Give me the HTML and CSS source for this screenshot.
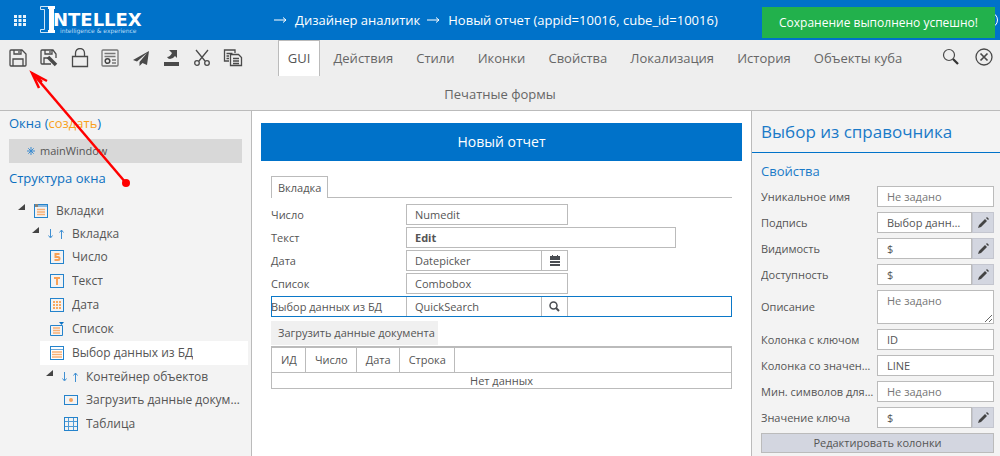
FILE: index.html
```html
<!DOCTYPE html>
<html lang="ru">
<head>
<meta charset="utf-8">
<title>Дизайнер аналитик</title>
<link rel="stylesheet" href="styles.css">
</head>
<body>
<header class="header">
  <button class="icon-btn apps" aria-label="Приложения"><svg width="12" height="11" fill="#e8f3fb"><path d="M0 0h3v3H0zM4.500 0h3v3h-3zM9 0h3v3H9zM0 4h3v3H0zM4.500 4h3v3h-3zM9 4h3v3H9zM0 8h3v3H0zM4.500 8h3v3h-3zM9 8h3v3H9z"/></svg></button>
  <a class="logo" href="#"><svg width="104" height="30" fill="#fff">
    <path d="M8 1.500H.5v3h4v20h-4v3H8" fill="none" stroke="#cfe6f7"/>
    <path d="M8 1h7v3h-1v21h1v3H8v-3h1V4H8z"/>
    <text class="logo-name" x="13" y="21">NTELLEX</text>
    <text class="logo-sub" x="20" y="28">intelligence &amp; experience</text>
  </svg></a>
  <nav class="crumbs">
    <svg class="arrow" width="14" height="8"><path d="M0 4h12M9 1.500L12 4 9 6.500"/></svg>
    <a href="#">Дизайнер аналитик</a>
    <svg class="arrow" width="14" height="8"><path d="M0 4h12M9 1.500L12 4 9 6.500"/></svg>
    <a href="#">Новый отчет (appid=10016, cube_id=10016)</a>
  </nav>
  <button class="icon-btn help" aria-label="Справка"><svg width="18" height="18"><circle cx="9" cy="9" r="7.500" fill="none" stroke="#fff"/></svg></button>
  <div class="toast" role="status">Сохранение выполнено успешно!</div>
</header>

<div class="toolbar">
  <div class="tools">
    <button class="icon-btn" aria-label="Сохранить"><svg width="18" height="18"><path d="M1 2q0-1 1-1h11l4 4v11q0 1-1 1H2q-1 0-1-1zM5 1v4h7V1M10 2v2M4 17v-7h10v7"/></svg></button>
    <button class="icon-btn" aria-label="Сохранить как"><svg width="18" height="18"><path d="M16 9V5l-3-4H2Q1 1 1 2v12q0 1 1 1h9M5 1v4h7V1M10 2v2M4 15V9h4"/><path d="M8 8l8 8" stroke-width="3.500"/></svg></button>
    <button class="icon-btn" aria-label="Блокировка"><svg width="18" height="20"><path d="M1.500 8.500h15v10h-15zM4.500 8.500V5a4.500 4.500 0 0 1 9 0v3.500"/></svg></button>
    <button class="icon-btn" aria-label="Права"><svg width="18" height="18"><g stroke="#777"><rect x="1" y="1" width="16" height="16" rx="1"/><path d="M3.500 4.500h11M3.500 7.500h11M11 11h4M11 14h4"/><circle cx="6.500" cy="12" r="2.300" stroke="#444" stroke-width="1.500"/></g></svg></button>
    <button class="icon-btn" aria-label="Отправить"><svg width="18" height="18"><path d="M17 2L1 11l4 1.500L15 4 7.500 13v4l3-3 4.500 2z" fill="#4a4a4a" stroke="none"/></svg></button>
    <button class="icon-btn" aria-label="Экспорт"><svg width="18" height="18"><path d="M2 13h15v4H2zM7 1h8v8l-2-2q-2 3-5 3-2 0-3-2 3 0 5-4z" fill="#4a4a4a" stroke="none"/></svg></button>
    <button class="icon-btn" aria-label="Вырезать"><svg width="18" height="18"><path d="M3 1l9 11M15 1L6 12"/><circle cx="4" cy="14" r="2.300"/><circle cx="14" cy="14" r="2.300"/></svg></button>
    <button class="icon-btn" aria-label="Копировать"><svg width="20" height="18"><path d="M6 12H1.500V1H12v3M3.500 4.500h6M3.500 7H6M3.500 9.500H6"/><path d="M7.500 5.500h8l3 3v8h-11zM10 9.500h6M10 12h6M10 14.500h6"/></svg></button>
  </div>
  <div class="tools-right">
    <button class="icon-btn" aria-label="Поиск"><svg width="18" height="18"><circle cx="7" cy="7" r="5.500" stroke-width="1.200"/><path d="M11 11l5 5" stroke-width="2.300" stroke="#333"/></svg></button>
    <button class="icon-btn" aria-label="Закрыть"><svg width="18" height="18"><circle cx="9" cy="9" r="8"/><path d="M5.500 5.500l7 7M12.500 5.500l-7 7" stroke-width="1.700"/></svg></button>
  </div>
  <a class="tab tab-active" href="#">GUI</a>
  <a class="tab" href="#">Действия</a>
  <a class="tab" href="#">Стили</a>
  <a class="tab" href="#">Иконки</a>
  <a class="tab" href="#">Свойства</a>
  <a class="tab" href="#">Локализация</a>
  <a class="tab" href="#">История</a>
  <a class="tab" href="#">Объекты куба</a>
  <a class="tab" href="#">Печатные формы</a>
</div>

<div class="workspace">
  <aside class="side">
    <h2 class="side-title">Окна (<a class="create" href="#">создать</a>)</h2>
    <a class="window-item" href="#"><svg width="8" height="8"><path d="M4 0v8M0 4h8M1.300 1.300l5.400 5.400M6.700 1.300L1.300 6.700" stroke="#3b8bd0"/></svg>mainWindow</a>
    <h2 class="side-title">Структура окна</h2>
    <ul class="tree">
      <li>
        <div class="node parent"><svg class="caret" width="8" height="8"><path d="M7 0v6H0z"/></svg><svg width="14" height="14"><rect class="frame" x=".5" y=".5" width="13" height="13"/><path d="M1 1h12v2H1z" fill="#8bb9df"/><path d="M1 0h3v3H1z" fill="#8a8378"/><path class="bars" d="M3 5.500h8M3 8h8M3 10.500h8"/></svg><span>Вкладки</span></div>
        <ul>
          <li>
            <div class="node parent"><svg class="caret" width="8" height="8"><path d="M7 0v6H0z"/></svg><svg width="16" height="10"><path class="move" d="M2.500 0v8M.5 6.500l2 2.500 2-2.500M13.500 10V1M11.500 3.500l2-2.500 2 2.500"/></svg><span>Вкладка</span></div>
            <ul>
              <li class="node"><svg width="14" height="14"><rect class="frame" x=".5" y=".5" width="13" height="13"/><path class="glyph" d="M9.500 4h-4v3h2.500q1.500 0 1.500 1.500T8 10H4.500"/></svg><span>Число</span></li>
              <li class="node"><svg width="14" height="14"><rect class="frame" x=".5" y=".5" width="13" height="13"/><path class="glyph" d="M4 4h6M7 4v7"/></svg><span>Текст</span></li>
              <li class="node"><svg width="14" height="14"><rect class="frame" x=".5" y=".5" width="13" height="13"/><path class="dots" d="M3 4h9M3 7h9M3 10h9"/></svg><span>Дата</span></li>
              <li class="node"><svg width="14" height="14"><path class="frame" d="M.5 3.500h12v10H.5z"/><path d="M9 0h5l-2.500 3z" fill="#0b72c4"/><path class="bars" d="M3 6h7M3 8.500h7M3 11h7"/></svg><span>Список</span></li>
              <li class="node selected"><svg width="14" height="14"><rect class="frame" x=".5" y=".5" width="13" height="13"/><path d="M1 3.500h12" stroke="#6aa8da"/><path class="bars" d="M2 6h10M2 8.500h10M2 11h10"/></svg><span>Выбор данных из БД</span></li>
              <li>
                <div class="node parent"><svg class="caret" width="8" height="8"><path d="M7 0v6H0z"/></svg><svg width="16" height="10"><path class="move" d="M2.500 0v8M.5 6.500l2 2.500 2-2.500M13.500 10V1M11.500 3.500l2-2.500 2 2.500"/></svg><span>Контейнер объектов</span></div>
                <ul>
                  <li class="node"><svg width="14" height="14"><rect class="frame" x=".5" y="2.500" width="13" height="9"/><circle cx="7" cy="7" r="2" fill="#f5a25d"/></svg><span>Загрузить данные документа</span></li>
                  <li class="node"><svg width="14" height="14"><rect class="frame" x=".5" y=".5" width="13" height="13"/><path d="M4.500 1v12M9.500 1v12M1 4.500h12M1 9.500h12" stroke="#4d9ad6"/></svg><span>Таблица</span></li>
                </ul>
              </li>
            </ul>
          </li>
        </ul>
      </li>
    </ul>
  </aside>

  <main class="canvas">
    <h1 class="banner">Новый отчет</h1>
    <div class="form">
      <div class="form-tabs"><a class="form-tab" href="#">Вкладка</a></div>
      <div class="row"><label for="num">Число</label><input id="num" value="Numedit"></div>
      <div class="row"><label for="txt">Текст</label><input id="txt" class="wide" value="Edit"></div>
      <div class="row"><label for="date">Дата</label><input id="date" class="joined" value="Datepicker"><button class="addon" aria-label="Календарь"><svg width="10" height="11" fill="#4a4d52"><path d="M0 1h2V0h1v1h4V0h1v1h2v4H0zM0 6h10v2H0zM0 9h10v2H0z"/></svg></button></div>
      <div class="row"><label for="list">Список</label><input id="list" value="Combobox"></div>
      <div class="row row-selected"><label for="qs">Выбор данных из БД</label><input id="qs" class="joined" value="QuickSearch"><button class="addon" aria-label="Найти"><svg width="11" height="11" fill="none" stroke="#4a4d52"><circle cx="4.500" cy="4.500" r="3.500" stroke-width="1.500"/><path d="M7 7l3 3" stroke-width="2"/></svg></button></div>
      <button class="load">Загрузить данные документа</button>
      <table class="grid">
        <thead><tr><th>ИД</th><th>Число</th><th>Дата</th><th>Строка</th><th class="rest"></th></tr></thead>
        <tbody><tr><td colspan="5">Нет данных</td></tr></tbody>
      </table>
    </div>
  </main>

  <aside class="props">
    <h2 class="props-title">Выбор из справочника</h2>
    <div class="props-body">
      <h3 class="props-sub">Свойства</h3>
      <div class="prop"><label for="p1">Уникальное имя</label><input id="p1" placeholder="Не задано"></div>
      <div class="prop"><label for="p2">Подпись</label><input id="p2" value="Выбор данных из БД"><button class="edit" aria-label="Изменить подпись"><svg width="11" height="11"><path d="M0 11l1-3 6-6 2 2-6 6zM8 1l1-1 2 2-1 1z"/></svg></button></div>
      <div class="prop"><label for="p3">Видимость</label><input id="p3" value="$"><button class="edit" aria-label="Изменить видимость"><svg width="11" height="11"><path d="M0 11l1-3 6-6 2 2-6 6zM8 1l1-1 2 2-1 1z"/></svg></button></div>
      <div class="prop"><label for="p4">Доступность</label><input id="p4" value="$"><button class="edit" aria-label="Изменить доступность"><svg width="11" height="11"><path d="M0 11l1-3 6-6 2 2-6 6zM8 1l1-1 2 2-1 1z"/></svg></button></div>
      <div class="prop"><label for="p5">Описание</label><textarea id="p5" placeholder="Не задано"></textarea></div>
      <div class="prop"><label for="p6">Колонка с ключом</label><input id="p6" value="ID"></div>
      <div class="prop"><label for="p7">Колонка со значением</label><input id="p7" value="LINE"></div>
      <div class="prop"><label for="p8">Мин. символов для поиска</label><input id="p8" placeholder="Не задано"></div>
      <div class="prop"><label for="p9">Значение ключа</label><input id="p9" value="$"><button class="edit" aria-label="Изменить значение ключа"><svg width="11" height="11"><path d="M0 11l1-3 6-6 2 2-6 6zM8 1l1-1 2 2-1 1z"/></svg></button></div>
      <button class="columns">Редактировать колонки</button>
    </div>
  </aside>
</div>

<svg class="pointer" width="140" height="195" fill="none" stroke="#f00"><path d="M126 183L34 75" stroke-width="2.500"/><path d="M47 81L32 73l7 15M32 73l10 9" stroke-width="2.500"/><circle cx="126" cy="183" r="4" fill="#f00" stroke="none"/></svg>
</body>
</html>
```
FILE: styles.css
```css
* { box-sizing: border-box; }
body {
  margin: 0;
  min-height: 100vh;
  display: flex;
  flex-direction: column;
  position: relative;
  overflow-x: hidden;
  background: #fff;
  color: #555;
  font: 12px/16px "Open Sans", "Noto Sans", sans-serif;
}
a { color: inherit; text-decoration: none; }
h1, h2, h3, ul { margin: 0; padding: 0; font-weight: 400; list-style: none; }
button, input, textarea { font: inherit; color: inherit; margin: 0; border-radius: 0; }
svg { display: block; flex: none; }
.icon-btn { border: 0; padding: 0; background: none; display: flex; justify-content: center; align-items: center; }

.header {
  position: relative;
  display: flex;
  align-items: center;
  height: 40px;
  background: #0072c9;
  color: #fff;
}
.apps { margin-left: 14px; }
.logo { margin-left: 14px; }
.logo-name { font: bold 18px "DejaVu Sans", sans-serif; }
.logo-sub { font: 6px "DejaVu Sans", sans-serif; fill: #b8dbf5; }
.crumbs { display: flex; align-items: center; gap: 7px; margin-left: 130px; font-size: 13px; white-space: nowrap; }
.arrow { fill: none; stroke: #fff; }
.help { margin-left: auto; margin-right: 1px; }
.toast {
  position: absolute;
  top: 7px;
  right: 5px;
  padding: 7px 17px;
  background: #22b14c;
  font-size: 12px;
  line-height: 17px;
}

.toolbar {
  background: #eee;
  border-bottom: 1px solid #bbb;
  text-align: center;
}
.tools { float: left; width: 245px; height: 35px; margin-left: 3px; display: grid; grid-template-columns: repeat(8, 1fr); align-items: center; }
.tools-right { float: right; height: 34px; display: flex; align-items: center; gap: 15px; margin-right: 7px; }
.tools svg, .tools-right svg { fill: none; stroke: #4a4a4a; stroke-width: 1.3; }
.tab {
  display: inline-block;
  vertical-align: top;
  height: 34px;
  padding: 7px 9px;
  border: 1px solid transparent;
  border-bottom: 0;
  font-size: 13px;
  line-height: 20px;
  color: #666;
}
.tab-active { background: #fff; border-color: #bbb; height: 36px; color: #555; }

.workspace { flex: 1; display: grid; grid-template-columns: 251px minmax(0, 1fr) 248px; }
.side { background: #f3f3f3; padding: 4px 3px 0 9px; min-width: 0; }
.side-title { font-size: 13px; line-height: 16px; color: #0b6fc0; }
.create { color: #f9a11b; }
.window-item {
  display: flex;
  align-items: center;
  gap: 5px;
  margin: 8px 6px 7px 0;
  padding-left: 18px;
  height: 24px;
  background: #d8d8d8;
  font-size: 11px;
}
.tree { margin-top: 13px; }
.tree ul { padding-left: 14px; }
.node { display: flex; align-items: center; gap: 8px; height: 24px; padding: 0 7px 0 10px; margin-left: 3px; }
.node span { overflow: hidden; text-overflow: ellipsis; white-space: nowrap; }
.parent { height: 23px; padding-left: 0; margin-left: 9px; }
.parent .caret { margin-bottom: 6px; fill: #444; }
.selected { background: #fff; }
.frame { fill: none; stroke: #2483cc; }
.bars { fill: none; stroke: #f9b074; stroke-width: 1.5; }
.dots { fill: none; stroke: #f9a860; stroke-width: 2; stroke-dasharray: 2 1; }
.glyph { fill: none; stroke: #f9a055; stroke-width: 2; }
.move { fill: none; stroke: #3f8fd2; }

.canvas { border: solid #bbb; border-width: 0 1px; padding: 12px 9px; min-width: 0; }
.banner { background: #0072c9; color: #fff; text-align: center; font-size: 14px; line-height: 38px; font-weight: 500; }
.form { padding: 15px 10px 0; font-size: 11px; }
.form-tabs { border-bottom: 1px solid #bbb; display: flex; margin-bottom: 6px; }
.form-tab { border: 1px solid #bbb; border-bottom: 0; background: #fff; padding: 3px 6px 2px; line-height: 16px; margin-bottom: -1px; }
.row { display: flex; align-items: center; height: 21px; margin-bottom: 2px; }
.row label { width: 135px; }
.row input { width: 162px; height: 21px; border: 1px solid #bbb; background: #fff; padding: 0 8px; }
.row .wide { width: 270px; font-weight: 700; }
.row .joined { width: 136px; }
.addon { width: 27px; height: 21px; margin-left: -1px; padding: 0; border: 1px solid #bbb; background: #fff; display: flex; align-items: center; justify-content: center; }
.row-selected { outline: 1px solid #0b78c8; outline-offset: -1px; }
.load { display: block; border: 0; background: #f0f0f0; padding: 4px 3px 4px 7px; line-height: 16px; margin: 4px 0 1px; }
.grid { width: 100%; border-collapse: collapse; border: 1px solid #bbb; border-top-width: 2px; }
.grid th { border: 1px solid #bbb; font-weight: 400; font-size: 11px; line-height: 16px; padding: 4px 8px 4px 9px; text-align: left; }
.grid .rest { width: 100%; }
.grid td { text-align: center; padding: 0; line-height: 15px; }

.props { background: #f3f3f3; min-width: 0; }
.props-title { padding: 9px 9px 8px; font-size: 17px; line-height: 24px; color: #1a7ac8; border-bottom: 1px solid #0072c9; }
.props-body { padding: 8px 6px 0 9px; display: grid; grid-template-columns: minmax(0, 1fr); gap: 5px; font-size: 11px; }
.props-sub { color: #1a7ac8; font-size: 13px; line-height: 20px; }
.prop { display: flex; align-items: center; }
.prop label { width: 116px; padding-right: 2px; flex: none; overflow: hidden; text-overflow: ellipsis; white-space: nowrap; }
.prop input, .prop textarea { flex: 1; min-width: 0; height: 21px; border: 1px solid #bbb; background: #fff; padding: 0 9px; text-overflow: ellipsis; display: block; }
.prop textarea { height: 34px; padding-top: 2px; line-height: 16px; overflow: hidden; resize: vertical; }
.prop ::placeholder { color: #777; opacity: 1; }
.edit { width: 22px; height: 21px; padding: 0; border: 1px solid #c4c6cf; background: #d3d6e0; display: flex; align-items: center; justify-content: center; }
.edit svg { fill: #444; }
.columns { height: 20px; border: 1px solid #bbb; background: #d3d6e0; padding: 0; }

.pointer { position: absolute; left: 0; top: 0; pointer-events: none; }
```
